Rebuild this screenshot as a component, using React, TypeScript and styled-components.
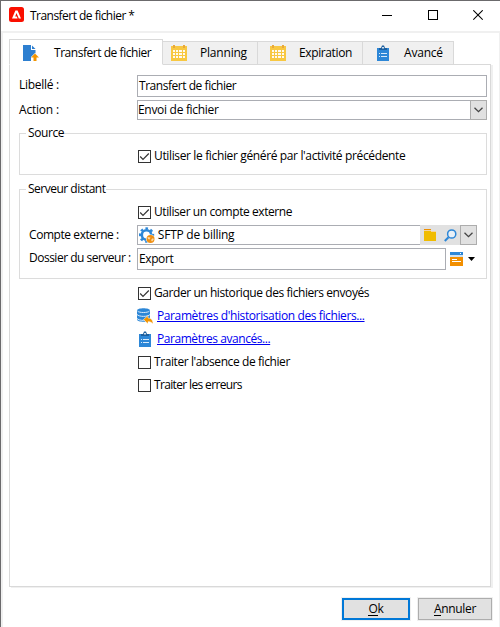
import React from "react";
import styled, { createGlobalStyle } from "styled-components";

const Global = createGlobalStyle`
  * { box-sizing: border-box; }
  body { margin: 0; background: #fff; overflow: hidden; }
`;

const Dialog = styled.div`
  width: 500px;
  height: 627px;
  display: flex;
  flex-direction: column;
  background: #fff;
  border: solid #6b6a6c;
  border-width: 1px 0 0 1px;
  color: #000;
  font: 12px/16px "Open Sans", "Noto Sans", sans-serif;
`;

const TitleBar = styled.header`
  height: 30px;
  display: flex;
  align-items: flex-start;
  padding: 6px 17px 0 8px;
`;

const Text = styled.span<{ $ls?: number }>`
  white-space: pre;
  letter-spacing: ${(p) => p.$ls ?? -0.3}px;
`;

const Title = styled(Text)`
  flex: 1;
  margin: 1px 0 0 6px;
`;

const Icon = styled.svg`
  display: block;
  flex: none;
`;

const WindowIcons = styled.div`
  display: flex;
  gap: 35.5px;
  margin-top: 3px;
`;

const Body = styled.main`
  flex: 1;
  display: flex;
  flex-direction: column;
  border: solid #f0f0f0;
  border-width: 2px 1px 0 2px;
  padding: 6px 6px 0 6px;
`;

const Tabs = styled.nav`
  display: flex;
  align-items: flex-end;
  height: 26px;
  margin-bottom: -1px;
  z-index: 1;
`;

const Tab = styled.div<{ $w: number; $active?: boolean; $gap: number; $pad: number }>`
  display: flex;
  align-items: flex-start;
  gap: ${(p) => p.$gap}px;
  width: ${(p) => p.$w}px;
  height: ${(p) => (p.$active ? 26 : 24)}px;
  padding: ${(p) => (p.$active ? 5 : 3)}px 0 0 ${(p) => p.$pad}px;
  background: ${(p) => (p.$active ? "#fff" : "#f0f0f0")};
  border: 1px solid #d9d9d9;
  border-left-width: ${(p) => (p.$active ? 1 : 0)}px;
  border-bottom-color: ${(p) => (p.$active ? "#fff" : "#d9d9d9")};
`;

const Panel = styled.section`
  width: 482px;
  height: 523px;
  border: 1px solid #d9d9d9;
  box-shadow: 2px 1px 0 #f0f0f0;
  padding: 10px 3px 0 9px;
  display: flex;
  flex-direction: column;
`;

const Row = styled.div<{ $h: number; $mt?: number }>`
  display: flex;
  align-items: flex-start;
  height: ${(p) => p.$h}px;
  margin-top: ${(p) => p.$mt ?? 0}px;
`;

const Label = styled(Text)<{ $w: number }>`
  flex: none;
  width: ${(p) => p.$w}px;
  margin-top: 2px;
`;

const Input = styled.div<{ $w: number; $h: number; $pad?: number }>`
  display: flex;
  align-items: flex-start;
  width: ${(p) => p.$w}px;
  height: ${(p) => p.$h}px;
  padding: ${(p) => (p.$h > 20 ? 2 : 1)}px 0 0 ${(p) => p.$pad ?? 1}px;
  border: 1px solid #abadb3;
  background: #fff;
`;

const FlushInput = styled(Input)`
  border-right: 0;
`;

const DropButton = styled.div`
  width: 17px;
  height: 20px;
  border: 1px solid #adadad;
  background: #e1e1e1;
  display: flex;
  align-items: center;
  justify-content: center;
`;

const Tools = styled.div`
  width: 40px;
  height: 20px;
  background: #e1e1e1;
  display: flex;
  align-items: center;
  padding-left: 4px;
  gap: 8px;
`;

const FormMenu = styled.div`
  display: flex;
  align-items: flex-start;
  gap: 5px;
  padding: 4px 0 0 4px;
`;

const Group = styled.fieldset<{ $h: number; $mt: number }>`
  min-width: 0;
  width: 468px;
  height: ${(p) => p.$h}px;
  margin: ${(p) => p.$mt}px 0 0;
  padding: 0 0 0 9px;
  border: 1px solid #dcdcdc;
`;

const Legend = styled.legend`
  margin-left: -3px;
  padding: 0 0 0 2px;
  height: 16px;
  line-height: 16px;
`;

const Check = styled.div<{ $ml: number; $mt: number }>`
  display: flex;
  align-items: center;
  gap: 3px;
  height: 16px;
  margin: ${(p) => p.$mt}px 0 0 ${(p) => p.$ml}px;
`;

const Box = styled.span`
  width: 13px;
  height: 13px;
  border: 1px solid #333;
  display: flex;
`;

const LinkRow = styled.div<{ $mt: number }>`
  display: flex;
  align-items: flex-start;
  gap: 4px;
  height: 16px;
  margin: ${(p) => p.$mt}px 0 0 118px;
`;

const Link = styled.a<{ $ls?: number }>`
  color: #0000f0;
  white-space: pre;
  text-decoration: underline;
  text-decoration-thickness: 1px;
  text-decoration-skip-ink: none;
  text-underline-offset: 1px;
  letter-spacing: ${(p) => p.$ls ?? -0.3}px;
`;

const Footer = styled.footer`
  display: flex;
  justify-content: flex-end;
  gap: 8px;
  margin: 11px 1px 0 0;
`;

const Button = styled.button<{ $w: number; $primary?: boolean }>`
  width: ${(p) => p.$w}px;
  height: 22px;
  padding: 0;
  border: ${(p) => (p.$primary ? "2px solid #0078d7" : "1px solid #adadad")};
  background: #e1e1e1;
  box-shadow: 0 0 0 1px #f0f0f0;
  font: inherit;
  line-height: 16px;
  color: #000;
`;

const Key = styled.span`
  border-bottom: 1px solid #000;
  display: inline-block;
  height: 15px;
`;

const Logo = () => (
  <Icon width="15" height="15" viewBox="0 0 15 15">
    <rect width="15" height="15" rx="2.5" fill="#fa0f00" />
    <path d="M3 11.5 6.4 3.5h2.2l3.4 8H9.8L7.5 6 6.2 9.4h1.6l.8 2.1z" fill="#fff" />
  </Icon>
);

const UploadIcon = () => (
  <Icon width="16" height="16" viewBox="0 0 16 16">
    <path d="M0 0h8v5h4.500v3.500L12 8l-4 4v4H0z" fill="#2d7fd0" />
    <path d="M9 .5 12.500 4H9z" fill="#2d7fd0" />
    <path d="m12 8.500 4 4h-2.500V16h-3v-3.500H8z" fill="#f29400" />
  </Icon>
);

const CalendarIcon = () => (
  <Icon width="16" height="16" viewBox="0 0 16 16" shapeRendering="crispEdges">
    <path d="M0 1h16v15H0z" fill="#f8c842" />
    <path d="M2 0h2v3H2zM12 0h2v3h-2z" fill="#e9a83c" />
    <path d="M2 5h2v2H2zM5 5h2v2H5zM8 5h3v2H8zM12 5h2v2h-2zM2 8h2v2H2zM5 8h2v2H5zM8 8h3v2H8zM12 8h2v2h-2zM2 11h2v2H2zM5 11h2v2H5zM8 11h3v2H8zM12 11h2v2h-2z" fill="#fffaf0" />
  </Icon>
);

const ClipboardIcon = () => (
  <Icon width="16" height="16" viewBox="0 0 16 16">
    <path d="M2 3h12v13H2z" fill="#2d87d7" />
    <path d="M4 5V3h2l1-2.500h2L10 3h2v2z" fill="#1c5f9f" />
    <path d="M7.200 2h1.600v1.500H7.200z" fill="#fff" />
    <path d="M4 8h1v1H4zM6 8h6v1H6zM4 11h1v1H4zM6 11h6v1H6z" fill="#d8eafa" />
  </Icon>
);

const GearIcon = () => (
  <Icon width="16" height="16" viewBox="0 0 16 16">
    <circle cx="7.500" cy="8" r="4.700" fill="none" stroke="#2d87d7" strokeWidth="2.600" />
    <circle cx="7.500" cy="8" r="6.600" fill="none" stroke="#2d87d7" strokeWidth="2.200" strokeDasharray="2.600 2.584" strokeDashoffset="1.300" />
    <circle cx="11.500" cy="12" r="4.500" fill="#fff" />
    <circle cx="11.500" cy="12" r="4" fill="#ef8f13" />
    <path d="m8.500 10 3 .5-1 2-1.500-.5zM12 13l2-2 .8 1.500-1.800 2z" fill="#fbd9a5" />
  </Icon>
);

const DatabaseIcon = () => (
  <Icon width="16" height="16" viewBox="0 0 16 16">
    <path d="M0 2.500C0-.5 13-.5 13 2.500v9c0 3-13 3-13 0z" fill="#2d87d7" />
    <path d="M.5 3c1.500 2 10.500 2 12 0M0 6.500c2 2.500 11 2.500 13 0M0 10.500c2 2.500 11 2.500 13 0" fill="none" stroke="#d9eafa" />
    <path d="m6.500 11.500 4.500-4V10c3 0 5 2 5 6-1.500-1.800-2.500-2.300-5-2.300V16z" fill="#f29400" stroke="#fff" strokeWidth=".5" />
  </Icon>
);

const FolderIcon = () => (
  <Icon width="12" height="12" viewBox="0 0 12 12" shapeRendering="crispEdges">
    <path d="M0 0h7v2H0z" fill="#ee8f00" />
    <path d="M0 2h12v10H0z" fill="#f0bc00" />
    <path d="M0 1h7v1h5v1H7V2H0z" fill="#f6d49b" />
  </Icon>
);

const SearchIcon = () => (
  <Icon width="13" height="13" viewBox="0 0 13 13">
    <circle cx="7.700" cy="5" r="4.100" fill="#e9f1f8" stroke="#2d87d7" strokeWidth="1.500" />
    <path d="M4.500 8.300.8 12" stroke="#2d87d7" strokeWidth="2" />
  </Icon>
);

const FormIcon = () => (
  <Icon width="13" height="14" viewBox="0 0 13 14" shapeRendering="crispEdges">
    <path d="M0 0h13v3H0z" fill="#2d87d7" />
    <path d="M0 3h13v2H0z" fill="#cfe1f0" />
    <path d="M0 5h13v9H0z" fill="#f28f00" />
    <path d="M2 7h5v1H2zM2 9h9v1H2zM10 1h1v1h-1z" fill="#fff" />
  </Icon>
);

const Chevron = () => (
  <Icon width="9" height="6" viewBox="0 0 9 6">
    <path d="m.5.700 4 4 4-4" fill="none" stroke="#444" strokeWidth="1.300" />
  </Icon>
);

const Caret = styled(Icon)`
  margin-top: 5px;
`;

const CheckItem = ({ ml, mt, checked, ls, children }: { ml: number; mt: number; checked?: boolean; ls?: number; children: string }) => (
  <Check $ml={ml} $mt={mt}>
    <Box>
      {checked && (
        <Icon width="11" height="11" viewBox="0 0 11 11">
          <path d="m1.200 5.500 2.800 2.800 5.800-5.800" fill="none" stroke="#333" strokeWidth="1.200" />
        </Icon>
      )}
    </Box>
    <Text $ls={ls}>{children}</Text>
  </Check>
);

export default function App() {
  return (
    <>
      <Global />
      <Dialog>
        <TitleBar>
          <Logo />
          <Title $ls={-0.53}>Transfert de fichier *</Title>
          <WindowIcons>
            <Icon width="10" height="11" shapeRendering="crispEdges"><path d="M0 5h10v1H0z" /></Icon>
            <Icon width="10" height="11" shapeRendering="crispEdges"><path d="M.5.500h9v9h-9z" fill="none" stroke="#000" /></Icon>
            <Icon width="10" height="11"><path d="m.3.300 9.400 9.400M9.700.300.300 9.700" stroke="#000" strokeWidth="1.100" /></Icon>
          </WindowIcons>
        </TitleBar>
        <Body>
          <Tabs>
            <Tab $active $w={154} $pad={13} $gap={15}><UploadIcon /><Text $ls={-0.46}>Transfert de fichier</Text></Tab>
            <Tab $w={95} $pad={8} $gap={13}><CalendarIcon /><Text $ls={-0.2}>Planning</Text></Tab>
            <Tab $w={105} $pad={12} $gap={13}><CalendarIcon /><Text $ls={-0.38}>Expiration</Text></Tab>
            <Tab $w={91} $pad={12} $gap={13}><ClipboardIcon /><Text $ls={-0.2}>Avancé</Text></Tab>
          </Tabs>
          <Panel>
            <Row $h={22}>
              <Label $w={118}>Libellé :</Label>
              <Input $w={350} $h={22}><Text $ls={-0.46}>Transfert de fichier</Text></Input>
            </Row>
            <Row $h={20} $mt={3}>
              <Label $w={118} $ls={-0.2}>Action :</Label>
              <FlushInput $w={333} $h={20} $pad={0}><Text>Envoi de fichier</Text></FlushInput>
              <DropButton><Chevron /></DropButton>
            </Row>
            <Group $h={50} $mt={5}>
              <Legend><Text $ls={-0.4}>Source</Text></Legend>
              <CheckItem ml={109} mt={7} checked ls={-0.36}>Utiliser le fichier généré par l'activité précédente</CheckItem>
            </Group>
            <Group $h={98} $mt={6}>
              <Legend><Text $ls={-0.5}>Serveur distant</Text></Legend>
              <CheckItem ml={109} mt={7} checked ls={-0.42}>Utiliser un compte externe</CheckItem>
              <Row $h={20} $mt={5}>
                <Label $w={108} $ls={-0.43}>Compte externe :</Label>
                <FlushInput $w={283} $h={20}><GearIcon /><Text $ls={-0.25}> SFTP de billing</Text></FlushInput>
                <Tools><FolderIcon /><SearchIcon /></Tools>
                <DropButton><Chevron /></DropButton>
              </Row>
              <Row $h={22} $mt={3}>
                <Label $w={108} $ls={-0.5}>Dossier du serveur :</Label>
                <Input $w={309} $h={22}><Text $ls={-0.4}>Export</Text></Input>
                <FormMenu>
                  <FormIcon />
                  <Caret width="7" height="5"><path d="M0 0h7L3.500 4z" /></Caret>
                </FormMenu>
              </Row>
            </Group>
            <CheckItem ml={119} mt={6} checked ls={-0.43}>Garder un historique des fichiers envoyés</CheckItem>
            <LinkRow $mt={7}><DatabaseIcon /><Link $ls={-0.39}>Paramètres d'historisation des fichiers...</Link></LinkRow>
            <LinkRow $mt={7}><ClipboardIcon /><Link $ls={-0.44}>Paramètres avancés...</Link></LinkRow>
            <CheckItem ml={119} mt={7} ls={-0.41}>Traiter l'absence de fichier</CheckItem>
            <CheckItem ml={119} mt={7} ls={-0.65}>Traiter les erreurs</CheckItem>
          </Panel>
          <Footer>
            <Button $w={68} $primary><Text><Key>O</Key>k</Text></Button>
            <Button $w={74}><Text><Key>A</Key>nnuler</Text></Button>
          </Footer>
        </Body>
      </Dialog>
    </>
  );
}
